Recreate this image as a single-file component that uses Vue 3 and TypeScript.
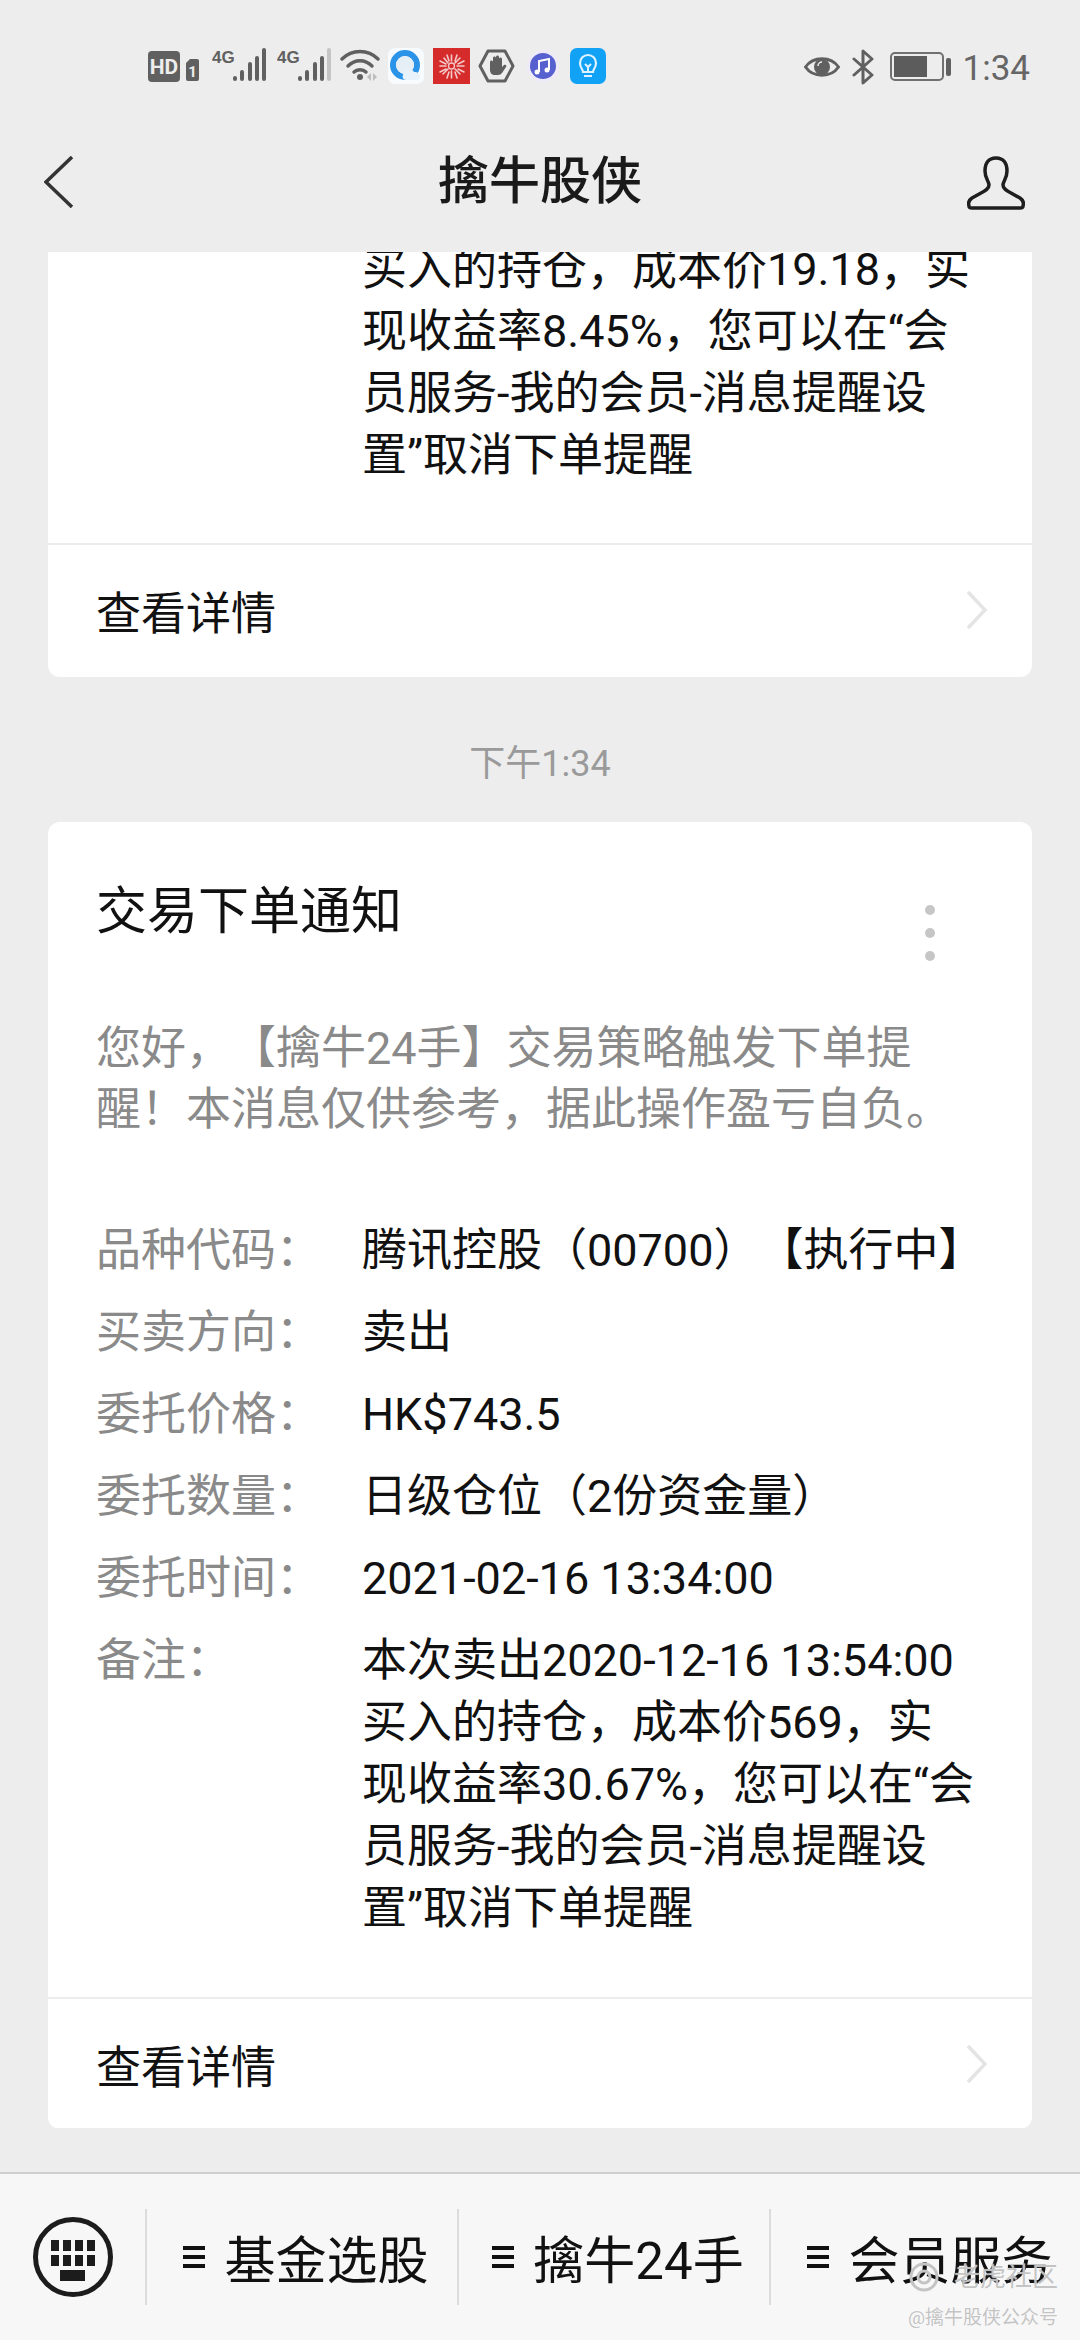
<script setup lang="ts">
interface Row { label: string; value: string }
const C = '\uFF0C'
const K = '\uFF1A'
const L = '\uFF08'
const R = '\uFF09'
const rows: Row[] = [
  { label: '品种代码' + K, value: '腾讯控股' + L + '00700' + R + '【执行中】' },
  { label: '买卖方向' + K, value: '卖出' },
  { label: '委托价格' + K, value: 'HK$743.5' },
  { label: '委托数量' + K, value: '日级仓位' + L + '2份资金量' + R },
  { label: '委托时间' + K, value: '2021-02-16 13:34:00' },
]
const noteLabel = '备注' + K
const noteA: string[] = [
  '买入的持仓' + C + '成本价19.18' + C + '实',
  '现收益率8.45%' + C + '您可以在“会',
  '员服务-我的会员-消息提醒设',
  '置”取消下单提醒',
]
const noteB: string[] = [
  '本次卖出2020-12-16 13:54:00',
  '买入的持仓' + C + '成本价569' + C + '实',
  '现收益率30.67%' + C + '您可以在“会',
  '员服务-我的会员-消息提醒设',
  '置”取消下单提醒',
]
const descA = '您好' + C + '【擒牛24手】交易策略触发下单提'
const descB = '醒\uFF01本消息仅供参考' + C + '据此操作盈亏自负。'
const menus: string[] = ['基金选股', '擒牛24手', '会员服务']
</script>

<template>
  <div class="page">
    <header class="top">
      <div class="status">
        <div class="status-left">
          <svg class="i-hd" width="52" height="32" viewBox="0 0 52 32">
            <rect x="0" y="0" width="32" height="31" rx="4" fill="#606060" />
            <text x="16" y="23" text-anchor="middle" class="hd-text">HD</text>
            <path d="M38 12l4-4h7a2 2 0 0 1 2 2v18a2 2 0 0 1-2 2h-9a2 2 0 0 1-2-2z" fill="#606060" />
            <text x="44.5" y="26" text-anchor="middle" class="sim-text">1</text>
          </svg>
          <svg class="i-sig" width="54" height="34" viewBox="0 0 54 34">
            <text x="0" y="15" class="g-text">4G</text>
            <g fill="none" stroke="#606060" stroke-width="4" stroke-linecap="round">
              <path d="M23 30v1M30 24v7M38 16v15M45 10v21M52 2v29" />
            </g>
          </svg>
          <svg class="i-sig2" width="54" height="34" viewBox="0 0 54 34">
            <text x="0" y="15" class="g-text">4G</text>
            <g fill="none" stroke="#606060" stroke-width="4" stroke-linecap="round">
              <path d="M23 30v1M30 24v7M38 16v15M45 10v21" />
              <path d="M52 2v29" stroke="#c4c4c4" />
            </g>
          </svg>
          <svg class="i-wifi" width="40" height="34" viewBox="0 0 40 34">
            <g fill="none" stroke="#606060" stroke-width="3.4" stroke-linecap="round">
              <path d="M2 11C12 1 28 1 38 11" />
              <path d="M8 18c7-7 17-7 24 0" />
              <path d="M14 24c3-3 9-3 12 0" />
            </g>
            <circle cx="20" cy="29" r="3" fill="#606060" />
            <path d="M31 25v8l-4-4zM33 25v8l4-4z" fill="#bdbdbd" />
          </svg>
          <svg class="i-app" width="36" height="36" viewBox="0 0 36 36">
            <rect width="36" height="36" rx="7" fill="#f7fbfe" />
            <circle cx="17" cy="17" r="12" fill="none" stroke="#2b93e8" stroke-width="6" />
            <circle cx="17" cy="17" r="9" fill="#e6eef6" />
            <path d="M15 27c1-6 9-7 11-3 4 0 6 2 6 5 0 2-2 3-4 3H18c-3 0-4-3-3-5z" fill="#e8f2fa" />
          </svg>
          <svg class="i-app2" width="37" height="36" viewBox="0 0 37 36">
            <rect width="37" height="36" fill="#d62b2b" />
            <g stroke="#f3c9c9" stroke-width="1.600" stroke-linecap="round">
              <path d="M18.5 7v6M18.5 23v7M7 18h6M24 18h7M11 10l4 5M22 21l5 5M27 10l-5 5M15 21l-5 5M14 7l2 6M24 7l-2 6M14 30l2-6M24 30l-2-6M7 13l6 3M31 13l-6 3M7 24l6-3M31 24l-6-3" />
            </g>
            <circle cx="18.500" cy="18" r="3" fill="none" stroke="#f3c9c9" stroke-width="1.300" />
          </svg>
          <svg class="i-app3" width="37" height="36" viewBox="0 0 37 36">
            <path d="M10 3h17l8 15-8 15H10L2 18z" fill="none" stroke="#606060" stroke-width="3" stroke-linejoin="round" />
            <path d="M12 14c0-2 3-2 3 0v-4c0-2 3-2 3 0V9c0-2 3-2 3 0v2c0-2 3-2 3 0v8l2-2c2-1 3 1 2 2l-4 6c-1 1-2 2-4 2h-3c-3 0-5-2-5-5z" fill="#606060" />
          </svg>
          <svg class="i-app4" width="32" height="32" viewBox="0 0 32 32">
            <circle cx="16" cy="16" r="16" fill="#eeeaf8" />
            <circle cx="16" cy="16" r="13" fill="#5661cf" />
            <path d="M12 22V11l10-2v11" fill="none" stroke="#fff" stroke-width="2" />
            <circle cx="10" cy="22" r="2.500" fill="#fff" />
            <circle cx="20" cy="20" r="2.500" fill="#fff" />
          </svg>
          <svg class="i-app5" width="36" height="36" viewBox="0 0 36 36">
            <rect width="36" height="36" rx="7" fill="#12a2f5" />
            <path d="M13 24c0-3-3-4-3-9a8 8 0 0 1 16 0c0 5-3 6-3 9z" fill="none" stroke="#dff3ff" stroke-width="2.200" />
            <path d="M14 28h8M18 24v-6M15 16l3 3 3-3" fill="none" stroke="#dff3ff" stroke-width="2" />
          </svg>
        </div>
        <div class="status-right">
          <svg class="i-eye" width="36" height="28" viewBox="0 0 36 28">
            <path d="M1.500 14C9 3 27 3 34.500 14 27 25 9 25 1.500 14z" fill="none" stroke="#606060" stroke-width="3" />
            <circle cx="18" cy="14" r="8" fill="#606060" />
            <path d="M14 13a4 4 0 0 1 4-4" fill="none" stroke="#ededed" stroke-width="1.500" />
          </svg>
          <svg class="i-bt" width="22" height="36" viewBox="0 0 22 36">
            <path d="M2 10l18 16-9 8V2l9 8L2 26" fill="none" stroke="#606060" stroke-width="3" stroke-linejoin="round" stroke-linecap="round" />
          </svg>
          <svg class="i-bat" width="61" height="30" viewBox="0 0 61 30">
            <rect x="1" y="1" width="52" height="27" rx="4" fill="none" stroke="#707070" stroke-width="2" />
            <rect x="4" y="4" width="33" height="21" fill="#5c5c5c" />
            <rect x="56" y="6" width="5" height="18" rx="2" fill="#606060" />
          </svg>
          <span class="clock">1:34</span>
        </div>
      </div>
      <nav class="nav">
        <svg class="back" width="30" height="52" viewBox="0 0 30 52">
          <path d="M28 1L2 26l26 25" fill="none" stroke="#333" stroke-width="3.500" />
        </svg>
        <h1 class="nav-title">擒牛股侠</h1>
        <svg class="avatar" width="58" height="54" viewBox="0 0 58 54">
          <path d="M29 2C21 2 18 8 18 15 18 23 22 25 22 29 22 33 18 35 14 37L5 42C2 44 1 47 2 50 2 52 3 52 5 52H53C55 52 56 52 56 50 57 47 56 44 53 42L44 37C40 35 36 33 36 29 36 25 40 23 40 15 40 8 37 2 29 2Z" fill="none" stroke="#1e1e1e" stroke-width="3.500" stroke-linejoin="round" />
        </svg>
      </nav>
    </header>

    <main class="feed">
      <section class="card first">
        <div class="note-only">
          <div v-for="line in noteA" :key="line" class="line">{{ line }}</div>
        </div>
        <div class="footer first-footer">
          <span>查看详情</span>
          <svg width="22" height="40" viewBox="0 0 22 40">
            <path d="M2 2l17 18L2 38" fill="none" stroke="#e4e4e4" stroke-width="3.500" />
          </svg>
        </div>
      </section>

      <div class="time">下午1:34</div>

      <section class="card">
        <h2 class="card-title">交易下单通知</h2>
        <div class="dots"><i></i><i></i><i></i></div>
        <p class="desc">{{ descA }}<br />{{ descB }}</p>
        <div class="rows">
          <template v-for="row in rows" :key="row.label">
            <div class="label">{{ row.label }}</div>
            <div class="value">{{ row.value }}</div>
          </template>
          <div class="label">{{ noteLabel }}</div>
          <div class="value">
            <div v-for="line in noteB" :key="line" class="line">{{ line }}</div>
          </div>
        </div>
        <div class="footer">
          <span>查看详情</span>
          <svg width="22" height="40" viewBox="0 0 22 40">
            <path d="M2 2l17 18L2 38" fill="none" stroke="#e4e4e4" stroke-width="3.500" />
          </svg>
        </div>
      </section>
    </main>

    <footer class="bar">
      <div class="kb-cell">
        <svg width="80" height="80" viewBox="0 0 80 80">
          <circle cx="40" cy="40" r="37.500" fill="none" stroke="#1c1c1c" stroke-width="5" />
          <g fill="#1c1c1c">
            <rect x="18" y="23" width="8" height="11" /><rect x="30" y="23" width="8" height="11" />
            <rect x="42" y="23" width="8" height="11" /><rect x="54" y="23" width="8" height="11" />
            <rect x="18" y="38" width="8" height="11" /><rect x="30" y="38" width="8" height="11" />
            <rect x="42" y="38" width="8" height="11" /><rect x="54" y="38" width="8" height="11" />
            <rect x="27" y="53" width="25" height="11" />
          </g>
        </svg>
      </div>
      <div v-for="m in menus" :key="m" class="menu">
        <span class="burger"><i></i><i></i><i></i></span>
        <span>{{ m }}</span>
      </div>
      <div class="mark">
        <div class="mark-top">
          <svg width="32" height="32" viewBox="0 0 32 32">
            <circle cx="16" cy="16" r="13" fill="none" stroke="#c4c4c4" stroke-width="3" />
            <circle cx="16" cy="16" r="6" fill="none" stroke="#c4c4c4" stroke-width="3" />
          </svg>
          <span>老虎社区</span>
        </div>
        <div class="mark-sub">@擒牛股侠公众号</div>
      </div>
    </footer>
  </div>
</template>

<style scoped>
.page {
  position: relative;
  width: 1080px;
  height: 2340px;
  display: flex;
  flex-direction: column;
  overflow: hidden;
  background: #ededed;
  font-family: Roboto, "Noto Sans CJK SC", sans-serif;
  text-spacing-trim: space-all;
  color: #111;
}
.top { height: 252px; flex: none; background: #ededed; display: flex; flex-direction: column; }
.status {
  height: 132px;
  flex: none;
  display: flex;
  justify-content: space-between;
  align-items: flex-start;
  padding-top: 48px;
  box-sizing: border-box;
}
.status-left { display: flex; align-items: flex-start; padding-left: 148px; }
.status-right { display: flex; align-items: flex-start; padding-right: 50px; }
.i-hd { margin-top: 3px; }
.i-sig { margin: 0 0 0 12px; }
.i-sig2 { margin-left: 11px; }
.i-wifi { margin-left: 9px; }
.i-app { margin-left: 8px; }
.i-app2 { margin-left: 9px; }
.i-app3 { margin-left: 8px; }
.i-app4 { margin: 2px 0 0 12px; }
.i-app5 { margin-left: 11px; }
.i-eye { margin: 5px 0 0 0; }
.i-bt { margin: 1px 0 0 12px; }
.i-bat { margin: 4px 0 0 16px; }
.clock { margin-left: 12px; font-size: 35px; line-height: 42px; height: 42px; color: #666; font-family: Roboto, sans-serif; }
.hd-text { font: 700 21px Roboto, sans-serif; fill: #ededed; }
.sim-text { font: 700 15px Roboto, sans-serif; fill: #ededed; }
.g-text { font: 700 17px "Liberation Sans", sans-serif; fill: #606060; }
.nav {
  flex: 1;
  display: grid;
  grid-template-columns: 1fr auto 1fr;
  align-items: center;
  padding: 0 44px;
  margin-top: -21px;
}
.back { justify-self: start; }
.avatar { justify-self: end; margin-top: 2px; margin-right: 11px; }
.nav-title { margin: 0; font-size: 51px; font-weight: 500; line-height: 60px; color: #1a1a1a; white-space: nowrap; }
.feed { flex: 1; min-height: 0; overflow: hidden; display: flex; flex-direction: column; padding: 0 48px; }
.card { position: relative; background: #fff; border-radius: 12px; flex: none; }
.card.first { border-radius: 0 0 12px 12px; }
.note-only { padding: 0 0 56px 314px; margin-top: -13px; }
.line { font-size: 45px; line-height: 62px; white-space: nowrap; color: #111; }
.footer {
  height: 132px;
  border-top: 2px solid #ececec;
  box-sizing: border-box;
  display: flex;
  align-items: center;
  justify-content: space-between;
  padding: 0 44px 0 48px;
  font-size: 45px;
  color: #111;
}
.first-footer { height: 134px; padding-bottom: 2px; }
.time { font-size: 36px; line-height: 50px; text-align: center; color: #9a9a9a; margin: 62px 0 33px; }
.card-title { margin: 0; padding: 55px 48px 0; font-size: 51px; line-height: 70px; font-weight: 400; color: #111; }
.dots { position: absolute; right: 97px; top: 83px; display: flex; flex-direction: column; gap: 13px; }
.dots i { display: block; width: 10px; height: 10px; border-radius: 50%; background: #c6c6c6; }
.desc { margin: 71px 0 0 48px; font-size: 45px; line-height: 61px; color: #8a8a8a; white-space: nowrap; }
.rows { display: grid; grid-template-columns: 266px 1fr; row-gap: 20px; padding: 0 48px; margin: 80px 0 57px; }
.label { font-size: 45px; line-height: 62px; color: #8a8a8a; white-space: nowrap; }
.value { font-size: 45px; line-height: 62px; color: #111; white-space: nowrap; }
.bar {
  height: 168px;
  flex: none;
  position: relative;
  margin-top: 44px;
  background: #f7f7f7;
  border-top: 2px solid #cfcfcf;
  box-sizing: border-box;
  display: grid;
  grid-template-columns: 145px repeat(3, 312px);
  align-items: center;
  font-size: 51px;
  color: #111;
}
.kb-cell { display: flex; justify-content: center; }
.menu {
  height: 96px;
  border-left: 2px solid #dcdcdc;
  box-sizing: border-box;
  display: flex;
  align-items: center;
  justify-content: center;
  gap: 19px;
  padding-left: 8px;
  white-space: nowrap;
}
.burger { display: flex; flex-direction: column; gap: 5px; }
.burger i { display: block; width: 22px; height: 4px; background: #111; }
.mark { position: absolute; left: 908px; top: 86px; color: rgba(180,180,180,.8); text-shadow: 0 0 1px #fff; white-space: nowrap; }
.mark-top { display: flex; align-items: center; gap: 14px; font-size: 26px; line-height: 34px; }
.mark-sub { margin-top: 12px; font-size: 19px; line-height: 24px; }
</style>
